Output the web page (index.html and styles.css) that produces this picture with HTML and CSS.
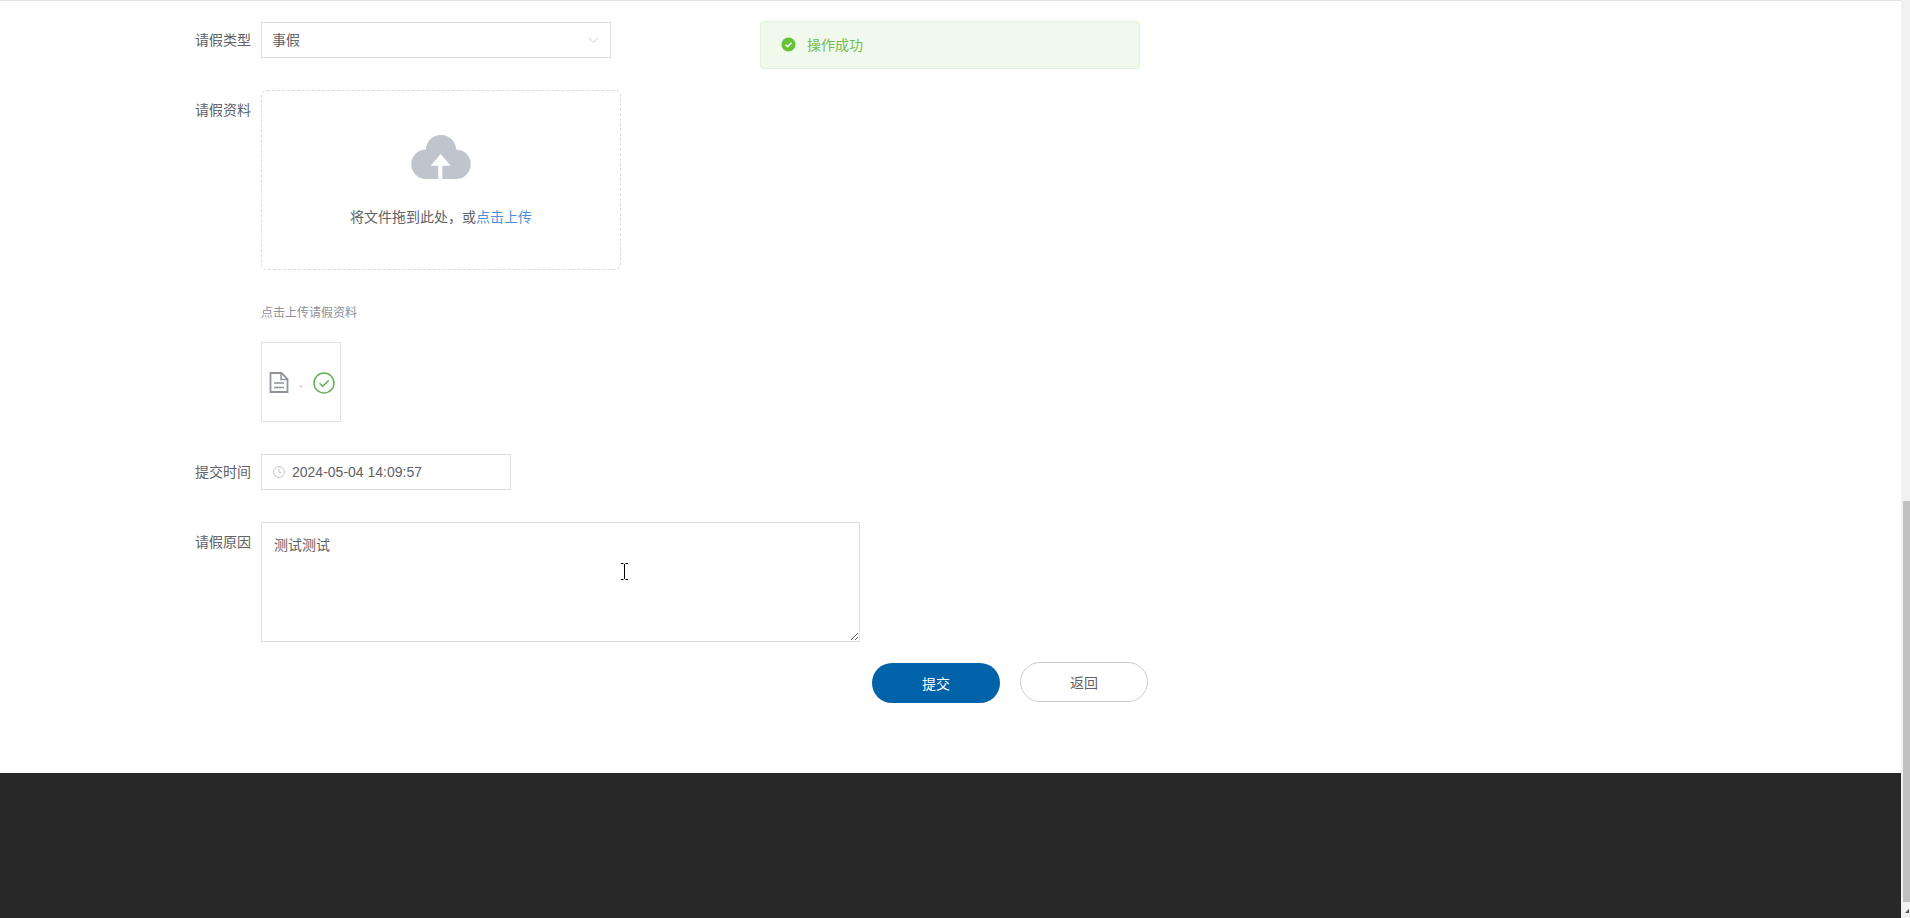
FILE: index.html
```html
<!DOCTYPE html>
<html lang="zh-CN">
<head>
  <meta charset="UTF-8" />
  <title>请假申请</title>
  <link rel="stylesheet" href="styles.css">
</head>
<body>
  <div class="page">
    <div class="content">
      <!-- toast -->
      <div class="toast">
        <svg class="toast-icon" viewBox="0 0 16 16">
          <circle cx="8" cy="8" r="7.5" fill="#67c23a" />
          <path d="M4.8 8.2l2.2 2.2 4.2-4.2" fill="none" stroke="#fff" stroke-width="1.5" />
        </svg>
        <span>操作成功</span>
      </div>

      <!-- form -->
      <form class="leave-form">
        <div class="row row-first">
          <label class="row-label">请假类型</label>
          <div class="select">
            <span class="select-value">事假</span>
            <svg class="chevron" viewBox="0 0 14 8">
              <path d="M1 1l6 6 6-6" fill="none" stroke="#b4b8c0" stroke-width="1" />
            </svg>
          </div>
        </div>

        <div class="row">
          <label class="row-label row-label-low">请假资料</label>
          <div class="upload-col">
            <div class="dropzone">
              <svg class="cloud" viewBox="0 0 60 44">
                <path fill="#c0c4cc" d="M15 44A14.750 14.750 0 0 1 15 14.500A15 14.500 0 0 1 45 14.500A14.750 14.750 0 0 1 45 44z" />
                <path fill="#fff" d="M29.700 19l10 11.700h-8.400V44h-4V30.700h-7.600z" />
              </svg>
              <p class="drop-text">将文件拖到此处，或<em>点击上传</em></p>
            </div>
            <p class="tip">点击上传请假资料</p>
            <div class="file-card">
              <svg class="file-icon" viewBox="0 0 20 21">
                <path fill="none" stroke="#909399" stroke-width="1.800" d="M1.500 1h11l6 6v13h-17z" />
                <path fill="none" stroke="#909399" stroke-width="1.500" d="M12 1v6.500h6.500M5 11h10M5 15.500h10" />
              </svg>
              <span class="file-name">.</span>
              <svg class="file-ok" viewBox="0 0 22 22">
                <circle cx="11" cy="11" r="10" fill="none" stroke="#67b05a" stroke-width="1.500" />
                <path d="M6.500 11.200l3.200 3.200 6-6" fill="none" stroke="#67b05a" stroke-width="1.500" />
              </svg>
            </div>
          </div>
        </div>

        <div class="row">
          <label class="row-label">提交时间</label>
          <div class="date-input">
            <svg class="clock" viewBox="0 0 12 12">
              <circle cx="6" cy="6" r="5.500" fill="none" stroke="#c0c4cc" />
              <path d="M6 2.800V6.300h2.600" fill="none" stroke="#c0c4cc" />
            </svg>
            <span>2024-05-04 14:09:57</span>
          </div>
        </div>

        <div class="row">
          <label class="row-label row-label-low">请假原因</label>
          <textarea class="reason">测试测试</textarea>
        </div>

        <div class="actions">
          <button type="button" class="btn btn-primary">提交</button>
          <button type="button" class="btn btn-plain">返回</button>
        </div>
      </form>

      <!-- text cursor left in the shot -->
      <svg class="ibeam" viewBox="0 0 7 17">
        <path d="M0 .5h2.500M4.500 .5H7M3.500 1v15M0 16.500h2.500M4.500 16.500H7" fill="none" stroke="#000" />
      </svg>

      <footer class="footer"></footer>
    </div>

    <!-- page scrollbar -->
    <div class="scrollbar">
      <div class="thumb"></div>
      <div class="arrow"></div>
    </div>
  </div>
</body>
</html>
```

FILE: styles.css
```css
*{box-sizing:border-box;}

html,body{height:100%;}

body{
  margin:0;
  overflow:hidden;
  background:#fff;
  font-family:"Liberation Sans","Noto Sans CJK SC",sans-serif;
  font-size:14px;
  color:#606266;
}

.page{display:flex;height:100%;}

.content{
  position:relative;
  flex:1;
  display:flex;
  flex-direction:column;
  border-top:1px solid #e2e2e2;
}

/* ---- toast ---- */
.toast{
  position:absolute;
  top:20px;left:760px;
  width:380px;height:48px;
  display:flex;
  align-items:center;
  gap:11px;
  padding:0 0 2px 20px;
  background:#f0f9eb;
  border:1px solid #e1f3d8;
  border-radius:4px;
  color:#72bd50;
}
.toast-icon{width:15px;height:15px;}

/* ---- form ---- */
.leave-form{flex:1;padding-left:195px;}

.row{display:flex;margin-top:32px;}
.row-first{margin-top:21px;}

.row-label{
  width:66px;
  flex:none;
  line-height:36px;
}
.row-label-low{line-height:40px;}

.select{
  width:350px;height:36px;
  display:flex;
  align-items:center;
  justify-content:space-between;
  padding:0 11px 0 10px;
  border:1px solid #dcdfe0;
}
.select-value{margin-bottom:2px;}
.chevron{width:11px;height:6px;}

.upload-col{display:flex;flex-direction:column;align-items:flex-start;}

.dropzone{
  width:360px;height:180px;
  display:flex;
  flex-direction:column;
  align-items:center;
  padding-top:44px;
  border:1px dashed #d9d9d9;
  border-radius:6px;
}
.cloud{width:60px;height:44px;}
.drop-text{margin:28px 0 0;line-height:20px;}
.drop-text em{font-style:normal;color:#4a90e2;}

.tip{
  margin:34px 0 0;
  font-size:12px;
  line-height:18px;
  color:#8e9199;
}

.file-card{
  width:80px;height:80px;
  margin-top:20px;
  display:flex;
  align-items:center;
  padding:1px 0 0 7px;
  border:1px solid #e2e2e2;
}
.file-icon{width:20px;height:21px;flex:none;}
.file-name{width:24px;text-align:center;font-size:12px;color:#909399;}
.file-ok{width:22px;height:22px;flex:none;}

.date-input{
  width:250px;height:36px;
  display:flex;
  align-items:center;
  gap:7px;
  padding-left:11px;
  border:1px solid #dcdfe0;
}
.clock{width:12px;height:12px;}

.reason{
  display:block;
  width:599px;height:120px;
  padding:10px 12px;
  border:1px solid #dcdfe0;
  border-radius:0;
  outline:none;
  font:inherit;
  line-height:24px;
  color:#606266;
  background:#fff;
}

.actions{
  display:flex;
  align-items:flex-start;
  gap:20px;
  margin-top:20px;
  padding-left:677px;
}

.btn{
  width:128px;height:40px;
  padding:0;
  border-radius:20px;
  font:inherit;
}
.btn-primary{
  margin-top:1px;
  border:none;
  background:#0062a8;
  color:#fff;
}
.btn-plain{
  border:1px solid #ccc;
  background:#fff;
  color:#606266;
}

.ibeam{
  position:absolute;
  top:562px;left:621px;
  width:7px;height:17px;
}

.footer{height:145px;background:#282828;}

/* ---- scrollbar ---- */
.scrollbar{
  position:relative;
  width:9px;
  flex:none;
  background:#f1f1f1;
  padding:501px 0 0 2px;
}
.thumb{height:401px;background:#c1c1c1;}
.arrow{
  position:absolute;
  right:1px;bottom:5px;
  width:0;height:0;
  border-left:4px solid transparent;
  border-bottom:4px solid #505050;
}
```
